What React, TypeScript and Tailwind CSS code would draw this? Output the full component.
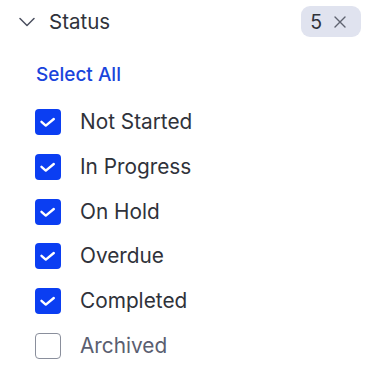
const items = [
  { label: "Not Started", checked: true },
  { label: "In Progress", checked: true },
  { label: "On Hold", checked: true },
  { label: "Overdue", checked: true },
  { label: "Completed", checked: true },
  { label: "Archived", checked: false },
]

function Check({ checked }: { checked: boolean }) {
  if (!checked) {
    return <span className="block w-[26px] h-[26px] rounded-[4px] border border-[#8a8f9c] bg-white" />
  }
  return (
    <span className="block w-[26px] h-[26px] rounded-[4px] bg-[#0b3ef2]">
      <svg width="26" height="26" viewBox="0 0 26 26" fill="none">
        <path d="M6.5 12.8 L10.8 16.6 L18.8 10" stroke="white" strokeWidth="2.4" strokeLinecap="round" strokeLinejoin="round" />
      </svg>
    </span>
  )
}

export default function App() {
  return (
    <div className="w-[384px] h-[378px] bg-white font-['Inter',sans-serif]">
      <div className="flex items-center justify-between pl-[19px] pr-[23px] pt-[6px]">
        <div className="flex items-center gap-[14px]">
          <svg width="16" height="10" viewBox="0 0 16 10" fill="none" className="text-[#4b5060]">
            <path d="M1 1.5 L8 8.5 L15 1.5" stroke="currentColor" strokeWidth="1.5" strokeLinecap="round" strokeLinejoin="round" />
          </svg>
          <span className="text-[20.5px] leading-[26px] text-[#2f323a]">Status</span>
        </div>
        <div className="flex items-center gap-[12px] h-[31px] pl-[9px] pr-[15px] rounded-[9px] bg-[#e0e3ef]">
          <span className="text-[19.5px] leading-[26px] text-[#2f323a]">5</span>
          <svg width="12" height="12" viewBox="0 0 12 12" fill="none" className="text-[#5f6370]">
            <path d="M1 1 L11 11 M11 1 L1 11" stroke="currentColor" strokeWidth="1.4" strokeLinecap="round" />
          </svg>
        </div>
      </div>
      <div className="pl-[36px] pt-[24.5px]">
        <button className="text-[19px] leading-[26px] font-medium text-[#1a44dc]">Select All</button>
      </div>
      <ul className="pl-[35px] pt-[21.5px] flex flex-col gap-[18.8px]">
        {items.map((it) => (
          <li key={it.label} className="flex items-center gap-[19px] h-[26px]">
            <Check checked={it.checked} />
            <span className={`text-[20.8px] leading-[26px] ${it.checked ? "text-[#2f323a]" : "text-[#5a5e70]"}`}>{it.label}</span>
          </li>
        ))}
      </ul>
    </div>
  )
}
